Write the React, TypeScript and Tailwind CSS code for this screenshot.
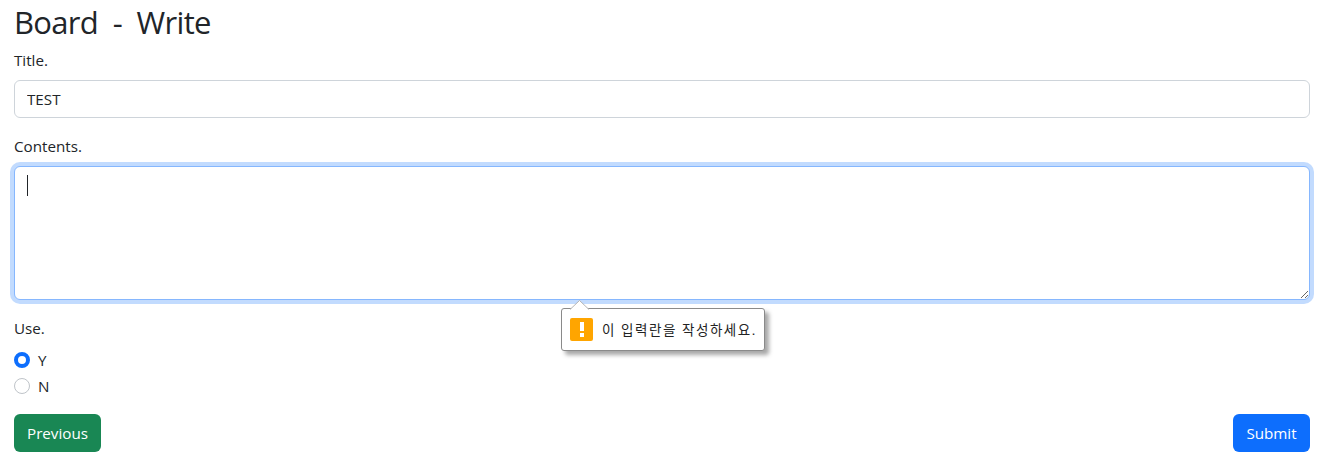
export default function App() {
  const font = { fontFamily: '"Open Sans", "Noto Sans CJK KR", sans-serif' };
  return (
    <div className="relative h-[470px] w-[1324px] overflow-hidden bg-white px-[14px] pt-[2px] text-base leading-6 text-[#212529]" style={font}>
      <h2 className="mb-2 h-[38.4px] text-[31px] leading-[40.4px] font-normal tracking-[-0.7px] [word-spacing:7.3px]">Board - Write</h2>
      <div className="mb-4">
        <label className="mb-2 block h-6 text-[15.2px]">Title.</label>
        <input
          defaultValue="TEST"
          className="block h-[38px] w-full rounded-md border border-[#ced4da] bg-white px-3 py-1.5 text-[15.2px] text-[#212529] outline-none"
          style={font}
        />
      </div>
      <div className="relative mb-4">
        <label className="mb-2 block h-6 text-[15.2px]">Contents.</label>
        <textarea
          className="block h-[134px] w-full rounded-md border border-[#86b7fe] bg-white px-3 py-1.5 shadow-[0_0_0_4px_rgba(13,110,253,0.25)] outline-none"
          style={font}
        />
        <span className="absolute top-[41px] left-[13px] h-[21px] w-px bg-[#212529]" />
      </div>
      <div className="mb-2">
        <label className="mb-2 block h-6 text-[15.2px]">Use.</label>
        <div className="mb-0.5 flex h-6 items-center gap-2 text-[15.2px]">
          <input type="radio" name="use" defaultChecked className="h-4 w-4 appearance-none rounded-full border-[4px] border-[#0d6efd] bg-white" />
          <span>Y</span>
        </div>
        <div className="mb-0.5 flex h-6 items-center gap-2 text-[15.2px]">
          <input type="radio" name="use" className="h-4 w-4 appearance-none rounded-full border border-[#bfc4c9] bg-white" />
          <span>N</span>
        </div>
      </div>
      <div className="mt-4 flex items-center justify-between">
        <button className="h-[38px] w-[87px] rounded-md bg-[#198754] text-[15.2px] text-white">Previous</button>
        <button className="h-[38px] w-[77px] rounded-md bg-[#0d6efd] text-[15.2px] text-white">Submit</button>
      </div>

      <div className="absolute top-[308px] left-[561px] flex h-[43px] w-[204px] items-center gap-[9px] rounded-[3px] border border-[#8a8a8a] bg-white pl-2 shadow-[4px_4px_4px_rgba(0,0,0,0.35)]">
        <span className="flex h-[23px] w-[23px] items-center justify-center rounded-[2px] bg-[#ffa500]">
          <svg width="6" height="15" viewBox="0 0 6 15">
            <rect x="1" y="0" width="4" height="9" fill="#fff" />
            <rect x="1" y="11" width="4" height="4" fill="#fff" />
          </svg>
        </span>
        <span className="text-[13.5px] leading-5 tracking-[1.55px] whitespace-nowrap text-[#222]">이 입력란을 작성하세요.</span>
        <svg className="absolute -top-[9px] left-[8px]" width="20" height="10" viewBox="0 0 20 10">
          <path d="M0 9.5 L9.5 0.5 L19 9.5" fill="#fff" stroke="#b5b5b5" />
          <rect x="1" y="9" width="17" height="1" fill="#fff" />
        </svg>
      </div>
    </div>
  );
}
